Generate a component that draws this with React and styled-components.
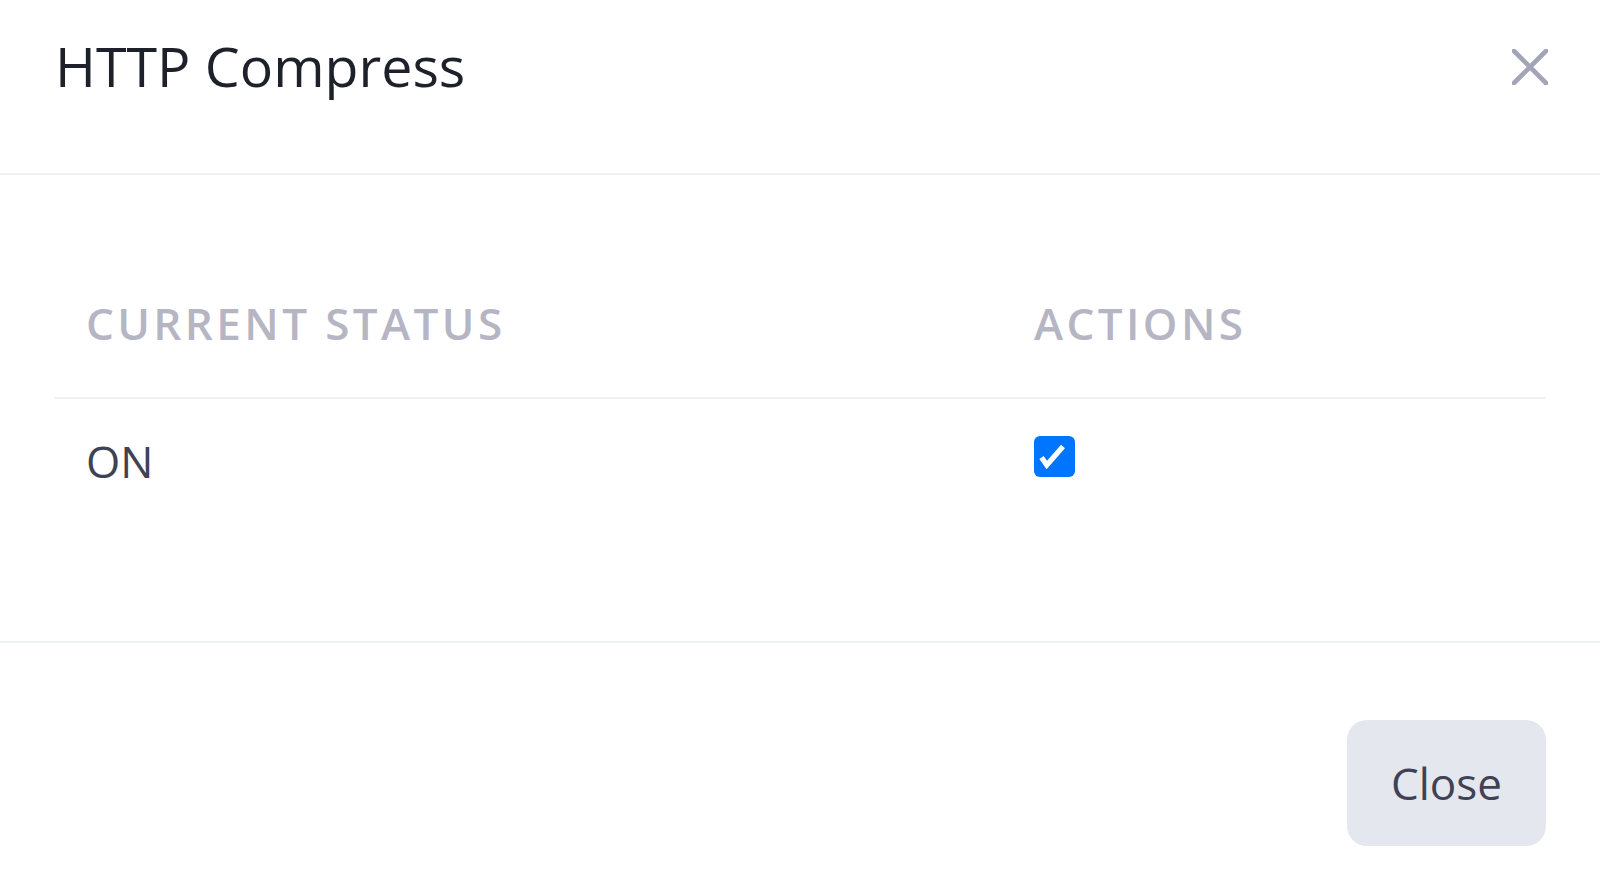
import React from 'react'
import styled, { createGlobalStyle } from 'styled-components'

const GlobalStyle = createGlobalStyle`
  html, body {
    margin: 0;
    padding: 0;
    background: #ffffff;
  }
  body {
    font-family: 'Open Sans', 'Noto Sans', sans-serif;
  }
`

const Modal = styled.div`
  display: flex;
  flex-direction: column;
  width: 1600px;
  min-height: 877px;
  background: #ffffff;
`

const Header = styled.div`
  display: flex;
  align-items: flex-start;
  justify-content: space-between;
  padding: 25px 52px 67px 55px;
  border-bottom: 2px solid #eff2f5;
`

const Title = styled.h5`
  margin: 0;
  font-size: 55.5px;
  font-weight: 400;
  line-height: 81px;
  color: #1e2129;
`

const CloseIcon = styled.button`
  display: flex;
  align-items: center;
  justify-content: center;
  width: 36px;
  height: 36px;
  margin-top: 24px;
  padding: 0;
  border: 0;
  background: transparent;
  color: #a1a5b7;
  cursor: pointer;
`

const Body = styled.div`
  padding: 74px 54px 118px;
  border-bottom: 2px solid #eff2f5;
`

const Table = styled.div`
  display: grid;
  grid-template-columns: 948px 1fr;
`

const HeadCell = styled.div`
  padding: 41px 32px 41px;
  border-bottom: 2px solid #eff2f5;
  font-size: 44px;
  font-weight: 600;
  line-height: 1.5;
  letter-spacing: 3.4px;
  text-transform: uppercase;
  color: #b5b5c3;
`

const Cell = styled.div`
  display: flex;
  align-items: center;
  padding: 29px 32px;
  font-size: 44px;
  line-height: 1.5;
  color: #3f4254;
`

const CheckWrap = styled.span`
  position: relative;
  display: inline-flex;
  width: 41px;
  height: 41px;
  margin-top: -9px;
`

const CheckInput = styled.input`
  appearance: none;
  margin: 0;
  width: 41px;
  height: 41px;
  border-radius: 6px;
  background: ${(p) => (p.checked ? '#0075ff' : '#ffffff')};
  border: ${(p) => (p.checked ? '0' : '2px solid #767676')};
  cursor: pointer;
`

const CheckMark = styled.svg`
  position: absolute;
  inset: 0;
  pointer-events: none;
`

const Footer = styled.div`
  display: flex;
  justify-content: flex-end;
  padding: 77px 54px 30px;
`

const Button = styled.button`
  height: 126px;
  padding: 0 44px;
  border: 0;
  border-radius: 20px;
  background: #e4e8ee;
  font-family: 'Open Sans', 'Noto Sans', sans-serif;
  font-size: 44px;
  line-height: 1.5;
  color: #3f4254;
  cursor: pointer;
`

const Checkbox = ({ checked, onChange }) => (
  <CheckWrap>
    <CheckInput type="checkbox" checked={checked} onChange={onChange} />
    {checked && (
      <CheckMark viewBox="0 0 41 41" width="41" height="41">
        <path
          d="M7.5 21.5 L12.8 29 L29 10.5"
          fill="none"
          stroke="#ffffff"
          strokeWidth="5.2"
          strokeLinejoin="miter"
        />
      </CheckMark>
    )}
  </CheckWrap>
)

export default function App() {
  const [on, setOn] = React.useState(true)

  return (
    <>
      <GlobalStyle />
      <Modal>
        <Header>
          <Title>HTTP Compress</Title>
          <CloseIcon aria-label="Close">
            <svg width="36" height="36" viewBox="0 0 36 36">
              <path
                d="M2 2 L34 34 M34 2 L2 34"
                stroke="currentColor"
                strokeWidth="4.6"
                strokeLinecap="round"
              />
            </svg>
          </CloseIcon>
        </Header>
        <Body>
          <Table>
            <HeadCell>Current Status</HeadCell>
            <HeadCell>Actions</HeadCell>
            <Cell>{on ? 'ON' : 'OFF'}</Cell>
            <Cell>
              <Checkbox checked={on} onChange={() => setOn(!on)} />
            </Cell>
          </Table>
        </Body>
        <Footer>
          <Button>Close</Button>
        </Footer>
      </Modal>
    </>
  )
}
